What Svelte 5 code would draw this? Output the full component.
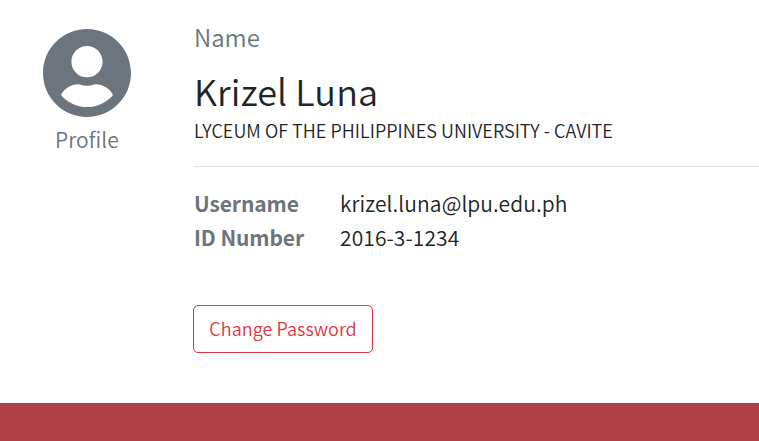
<script>
  const details = [
    { label: 'Username', value: 'krizel.luna@lpu.edu.ph' },
    { label: 'ID Number', value: '2016-3-1234' }
  ];
</script>

<div class="page">
  <main>
    <aside>
      <svg viewBox="0 8 496 496" aria-hidden="true">
        <path fill="currentColor" d="M248 8C111 8 0 119 0 256s111 248 248 248 248-111 248-248S385 8 248 8zm0 96c48.600 0 88 39.400 88 88s-39.400 88-88 88-88-39.400-88-88 39.400-88 88-88zm0 344c-58.700 0-111.300-26.600-146.500-68.200 18.800-35.400 55.600-59.800 98.500-59.800 2.400 0 4.800.4 7.100 1.100 13 4.200 26.600 6.900 40.900 6.900 14.300 0 28-2.700 40.900-6.900 2.300-.7 4.700-1.100 7.100-1.100 42.900 0 79.700 24.400 98.500 59.800C359.300 421.400 306.700 448 248 448z" />
      </svg>
      <span class="caption">Profile</span>
    </aside>
    <section>
      <div class="name-label">Name</div>
      <h1>Krizel Luna</h1>
      <div class="school">LYCEUM OF THE PHILIPPINES UNIVERSITY - CAVITE</div>
      <hr />
      <dl>
        {#each details as item}
          <dt>{item.label}</dt>
          <dd>{item.value}</dd>
        {/each}
      </dl>
      <button>Change Password</button>
    </section>
  </main>
  <footer></footer>
</div>

<style>
  .page {
    display: flex;
    flex-direction: column;
    height: 441px;
    overflow: hidden;
    background: #fff;
    color: #212529;
    font-family: "Noto Sans CJK SC", "Noto Sans CJK JP", sans-serif;
    font-weight: 350;
    white-space: nowrap;
  }
  main {
    display: flex;
    flex: 1;
    min-height: 0;
  }
  aside {
    display: flex;
    flex-direction: column;
    align-items: center;
    width: 174px;
    flex: none;
    padding-top: 29px;
    color: #6c757d;
  }
  svg {
    width: 88px;
    height: 88px;
  }
  .caption {
    margin-top: 6px;
    font-size: 21px;
    line-height: 32px;
    letter-spacing: 0.1px;
  }
  section {
    flex: 1;
    min-width: 0;
    padding: 19px 0 0 194px;
    margin-left: -174px;
  }
  .name-label {
    color: #6c757d;
    font-size: 24px;
    line-height: 36px;
  }
  h1 {
    margin: 11px 0 0;
    font-size: 36px;
    font-weight: 350;
    line-height: 48px;
    letter-spacing: 0.1px;
  }
  .school {
    font-size: 18px;
    line-height: 28px;
    margin-top: 2px;
    letter-spacing: 0.04px;
  }
  hr {
    margin: 22px 0 19px;
    border: 0;
    border-top: 1px solid #e0e0e0;
  }
  dl {
    display: grid;
    grid-template-columns: 146px auto;
    grid-auto-rows: 34px;
    margin: 0;
    font-size: 21px;
    line-height: 34px;
  }
  dt {
    color: #6c757d;
    font-weight: 700;
    letter-spacing: -0.1px;
  }
  dd {
    margin: 0;
    letter-spacing: 0.1px;
  }
  button {
    display: block;
    width: 180px;
    height: 48px;
    margin: 51px 0 0 -1px;
    padding: 0 0 2px;
    border: 1px solid #dc3545;
    border-radius: 5px;
    background: #fff;
    color: #dc3545;
    font: 350 18px/44px "Noto Sans CJK SC", "Noto Sans CJK JP", sans-serif;
    letter-spacing: 0.05px;
  }
  footer {
    height: 38px;
    flex: none;
    background: #b03f46;
  }
</style>
